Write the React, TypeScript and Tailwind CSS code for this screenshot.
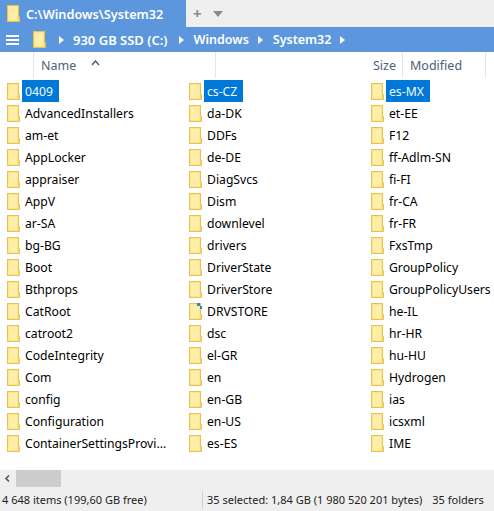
const COL1 = ['0409', 'AdvancedInstallers', 'am-et', 'AppLocker', 'appraiser', 'AppV', 'ar-SA', 'bg-BG', 'Boot', 'Bthprops', 'CatRoot', 'catroot2', 'CodeIntegrity', 'Com', 'config', 'Configuration', 'ContainerSettingsProvi...'];
const COL2 = ['cs-CZ', 'da-DK', 'DDFs', 'de-DE', 'DiagSvcs', 'Dism', 'downlevel', 'drivers', 'DriverState', 'DriverStore', 'DRVSTORE', 'dsc', 'el-GR', 'en', 'en-GB', 'en-US', 'es-ES'];
const COL3 = ['es-MX', 'et-EE', 'F12', 'ff-Adlm-SN', 'fi-FI', 'fr-CA', 'fr-FR', 'FxsTmp', 'GroupPolicy', 'GroupPolicyUsers', 'he-IL', 'hr-HR', 'hu-HU', 'Hydrogen', 'ias', 'icsxml', 'IME'];

function Folder({ badge = false }: { badge?: boolean }) {
  return (
    <svg width="13" height="17" viewBox="0 0 13 17" className="shrink-0">
      <rect x="0.5" y="0.5" width="11" height="16" fill="#fde58f" stroke="#e8c350" />
      <path d="M11.5 11.5h1v5h-1" fill="#fde58f" stroke="#e8c350" />
      <path d="M2 2h8v13H2z" fill="#ffeea8" />
      {badge && <path d="M8 0h3v3h3v3h-3V3H8z" fill="#2b7fd4" />}
    </svg>
  );
}

function Row({ name, selected }: { name: string; selected: boolean }) {
  return (
    <div className="flex h-[22px] items-center pl-[7px]">
      <Folder badge={name === 'DRVSTORE'} />
      {selected ? (
        <span className="ml-[2px] flex h-[22px] items-center bg-[#0078d7] pt-[2px] pr-[6px] pl-[3px] text-[#f4f9ff]">{name}</span>
      ) : (
        <span className="ml-[5px] whitespace-nowrap pt-[2px] text-black">{name}</span>
      )}
    </div>
  );
}

function Caret() {
  return (
    <svg width="5" height="8" viewBox="0 0 5 8" className="shrink-0">
      <path d="M0 0l5 4-5 4z" fill="#ffffff" />
    </svg>
  );
}

export default function App() {
  return (
    <div className="flex h-[511px] w-[494px] flex-col overflow-hidden bg-white text-[12.2px] font-['Noto_Sans',sans-serif]">
      {/* tabs */}
      <div className="flex h-[27px] items-center bg-[#efefef]">
        <div className="flex h-full w-[186px] items-center gap-[6px] bg-[#5c96dd] pl-[7px]">
          <Folder />
          <span className="pt-[2px] text-[12.7px] font-semibold text-white">C:\Windows\System32</span>
        </div>
        <span className="ml-[7px] text-[15px] leading-none font-bold text-[#8a8a8a]">+</span>
        <svg width="10" height="6" viewBox="0 0 10 6" className="ml-[11px]">
          <path d="M0 0h10L5 6z" fill="#8a8a8a" />
        </svg>
      </div>

      {/* address bar */}
      <div className="flex h-[25px] items-center bg-[#5c96dd] pl-[6px] text-[13px] font-semibold text-white">
        <div className="flex w-[13px] flex-col gap-[2px]">
          <div className="h-[2px] bg-white" />
          <div className="h-[2px] bg-white" />
          <div className="h-[2px] bg-white" />
        </div>
        <div className="ml-[14px]"><Folder /></div>
        <div className="ml-[13px]"><Caret /></div>
        <span className="ml-[9px] pt-[2px]">930 GB SSD (C:)</span>
        <div className="ml-[11px]"><Caret /></div>
        <span className="ml-[10px] pt-[2px] text-[12.5px]">Windows</span>
        <div className="ml-[9px]"><Caret /></div>
        <span className="ml-[10px] pt-[2px] text-[12.5px]">System32</span>
        <div className="ml-[9px]"><Caret /></div>
      </div>

      {/* column headers */}
      <div className="flex h-[26px] items-center text-[12.5px] text-[#4c607a]">
        <div className="flex h-full w-[215px] items-center">
          <div className="flex h-full w-[34px] border-r border-[#e5e5e5]" />
          <span className="ml-[7px] pt-[3px]">Name</span>
          <svg width="9" height="6" viewBox="0 0 9 6" className="mb-[4px] ml-[15px]">
            <path d="M1 5l3.5-4L8 5" fill="none" stroke="#4c607a" strokeWidth="1.5" />
          </svg>
        </div>
        <div className="flex h-full w-[188px] items-center justify-end border-r border-l border-[#e5e5e5] pt-[3px] pr-[6px]">Size</div>
        <div className="flex h-full w-[83px] items-center border-r border-[#e5e5e5] pt-[3px] pl-[7px]">Modified</div>
      </div>

      {/* files */}
      <div className="flex h-[392px] items-start pt-[2px]">
        {[COL1, COL2, COL3].map((col, i) => (
          <div key={i} className="w-[182px] shrink-0">
            {col.map((name, j) => (
              <Row key={name} name={name} selected={j === 0} />
            ))}
          </div>
        ))}
      </div>

      {/* scrollbar */}
      <div className="flex h-[17px] items-center bg-[#efefef]">
        <svg width="16" height="17" viewBox="0 0 16 17" className="shrink-0">
          <path d="M9 5.5L6 8.5l3 3" fill="none" stroke="#555555" strokeWidth="1.6" />
        </svg>
        <div className="h-full w-[45px] bg-[#cdcdcd]" />
      </div>

      {/* status bar */}
      <div className="flex h-[24px] items-center whitespace-nowrap bg-[#efefef] pt-[2px] text-[11px] text-[#222222]">
        <div className="flex w-[202px] shrink-0 items-center pl-[2px]">4 648 items (199,60 GB free)</div>
        <div className="flex h-[18px] shrink-0 items-center border-l border-[#cfcfcf] pl-[4px]">35 selected: 1,84 GB (1 980 520 201 bytes)</div>
        <span className="ml-[10px]">35 folders</span>
      </div>
    </div>
  );
}
